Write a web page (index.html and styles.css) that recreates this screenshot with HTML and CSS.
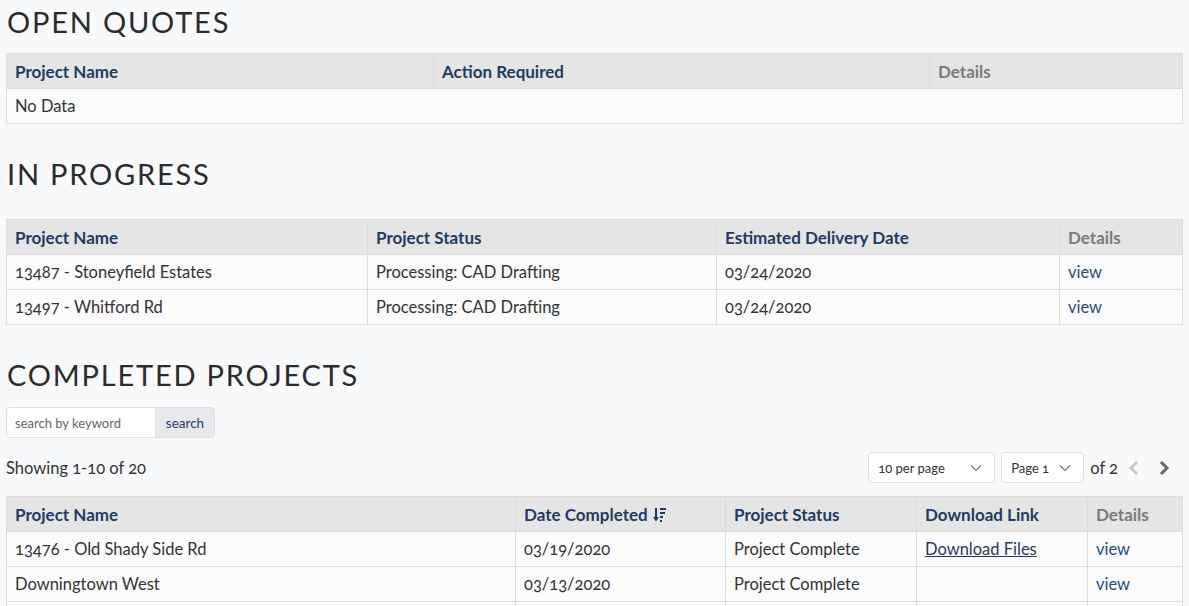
FILE: index.html
```html
<!DOCTYPE html>
<html>
<head>
<meta charset="utf-8">
<link rel="stylesheet" href="styles.css">
</head>
<body>
<div class="page">
  <section class="section s-open">
    <h2 class="title">OPEN QUOTES</h2>
    <table class="grid">
      <colgroup><col class="w427"><col class="w496"><col class="w253"></colgroup>
      <thead><tr><th>Project Name</th><th>Action Required</th><th class="muted">Details</th></tr></thead>
      <tbody><tr><td colspan="3">No Data</td></tr></tbody>
    </table>
  </section>

  <section class="section s-progress">
    <h2 class="title">IN PROGRESS</h2>
    <table class="grid">
      <colgroup><col class="w361"><col class="w349"><col class="w343"><col class="w123"></colgroup>
      <thead><tr><th>Project Name</th><th>Project Status</th><th>Estimated Delivery Date</th><th class="muted">Details</th></tr></thead>
      <tbody>
        <tr><td>13487 - Stoneyfield Estates</td><td>Processing: CAD Drafting</td><td>03/24/2020</td><td><a class="view" href="#">view</a></td></tr>
        <tr><td>13497 - Whitford Rd</td><td>Processing: CAD Drafting</td><td>03/24/2020</td><td><a class="view" href="#">view</a></td></tr>
      </tbody>
    </table>
  </section>

  <section class="section s-done">
    <h2 class="title">COMPLETED PROJECTS</h2>
    <div class="search">
      <input class="search-input" type="text" placeholder="search by keyword">
      <button class="search-btn">search</button>
    </div>
    <div class="toolbar">
      <div class="showing">Showing 1-10 of 20</div>
      <div class="pager">
        <div class="select sel-per">10 per page
          <svg class="caret" width="12" height="8" viewBox="0 0 12 8"><path d="M1 1.5 L6 6.5 L11 1.5" fill="none" stroke="#777" stroke-width="1.2"/></svg>
        </div>
        <div class="select sel-page">Page 1
          <svg class="caret" width="12" height="8" viewBox="0 0 12 8"><path d="M1 1.5 L6 6.5 L11 1.5" fill="none" stroke="#777" stroke-width="1.2"/></svg>
        </div>
        <span class="of">of 2</span>
        <svg class="chev chev-prev" width="14" height="18" viewBox="0 0 14 18"><path d="M10 3 L4 9 L10 15" fill="none" stroke="#c8c8c8" stroke-width="3"/></svg>
        <svg class="chev chev-next" width="14" height="18" viewBox="0 0 14 18"><path d="M4 3 L10 9 L4 15" fill="none" stroke="#666" stroke-width="3"/></svg>
      </div>
    </div>
    <table class="grid">
      <colgroup><col class="w509"><col class="w210"><col class="w191"><col class="w171"><col class="w95"></colgroup>
      <thead><tr><th>Project Name</th><th>Date Completed <svg class="sort" width="14" height="16" viewBox="0 0 14 16"><path d="M3 1 V13" stroke="#1f3b64" stroke-width="2"/><path d="M0 10 L3 14.5 L6 10 Z" fill="#1f3b64"/><path d="M7 2 H13 M7 6 H12 M7 10 H10 M7 14 H9" stroke="#1f3b64" stroke-width="1.8"/></svg></th><th>Project Status</th><th>Download Link</th><th class="muted">Details</th></tr></thead>
      <tbody>
        <tr><td>13476 - Old Shady Side Rd</td><td>03/19/2020</td><td>Project Complete</td><td><a class="dl" href="#">Download Files</a></td><td><a class="view" href="#">view</a></td></tr>
        <tr><td>Downingtown West</td><td>03/13/2020</td><td>Project Complete</td><td></td><td><a class="view" href="#">view</a></td></tr>
        <tr><td></td><td></td><td></td><td></td><td></td></tr>
      </tbody>
    </table>
  </section>
</div>
</body>
</html>
```
FILE: styles.css
```css
html, body {
  margin: 0;
  padding: 0;
  background: #f8f9fb;
}
body {
  font-family: "Lato", "Open Sans", sans-serif;
  color: #333;
  font-variant-numeric: oldstyle-nums;
}
.page {
  padding: 0 7px 0 6px;
  height: 606px;
  overflow: hidden;
}
.title {
  margin: 0;
  font-family: "Lato", sans-serif;
  font-weight: 400;
  font-size: 29px;
  letter-spacing: 1.8px;
  color: #2b2b2b;
  line-height: 36px;
  padding-left: 1px;
}
.s-open .title { padding-top: 4px; margin-bottom: 13px; }
.s-progress { margin-top: 32px; }
.s-progress .title { margin-bottom: 27px; }
.s-done { margin-top: 32px; }
.s-done .title { margin-bottom: 14px; }

.grid {
  width: 1176px;
  border-collapse: collapse;
  table-layout: fixed;
  font-size: 16.5px;
}
.grid th, .grid td {
  border: 1px solid #dcdcdc;
  padding: 0 8px;
  text-align: left;
  white-space: nowrap;
  overflow: hidden;
}
.grid th {
  background: #e5e5e5;
  color: #1f3b64;
  font-weight: 700;
  font-size: 17px;
  height: 34px;
}
.grid th.muted { color: #7a7a7a; }
.grid td {
  background: #fbfbfc;
  height: 34px;
  color: #333;
}
.w427 { width: 427px; } .w496 { width: 496px; } .w253 { width: 253px; }
.w361 { width: 361px; } .w349 { width: 349px; } .w343 { width: 343px; } .w123 { width: 123px; }
.w509 { width: 509px; } .w210 { width: 210px; } .w191 { width: 191px; } .w171 { width: 171px; } .w95 { width: 95px; }

.view { color: #1f4b7e; text-decoration: none; }
.dl { color: #1f3b64; text-decoration: underline; }
.sort { vertical-align: -2px; margin-left: 1px; }

.search {
  display: flex;
  width: 209px;
  height: 31px;
  border: 1px solid #dedede;
  border-radius: 4px;
  overflow: hidden;
  box-sizing: border-box;
}
.search-input {
  width: 148px;
  border: none;
  background: #fff;
  padding: 0 8px;
  font-family: "Lato", sans-serif;
  font-size: 13px;
  color: #555;
  outline: none;
  box-sizing: border-box;
}
.search-input::placeholder { color: #666; }
.search-btn {
  flex: 1;
  border: none;
  border-left: 1px solid #dedede;
  background: #e6e8eb;
  color: #1f3b64;
  font-family: "Lato", sans-serif;
  font-size: 13.5px;
  padding: 0;
}
.toolbar {
  display: flex;
  justify-content: space-between;
  align-items: center;
  margin-top: 14px;
  margin-bottom: 13px;
  height: 31px;
}
.showing { font-size: 16.5px; color: #333; }
.pager {
  display: flex;
  align-items: center;
  margin-right: 11px;
}
.select {
  height: 31px;
  box-sizing: border-box;
  border: 1px solid #e0e0e0;
  border-radius: 4px;
  background: #fff;
  display: flex;
  align-items: center;
  justify-content: space-between;
  padding: 0 12px 0 9px;
  font-size: 13px;
  color: #333;
}
.sel-per { width: 127px; }
.sel-page { width: 83px; margin-left: 6px; }
.of { font-size: 16.5px; margin-left: 6px; }
.chev-prev { margin-left: 9px; }
.chev-next { margin-left: 16px; }
```
